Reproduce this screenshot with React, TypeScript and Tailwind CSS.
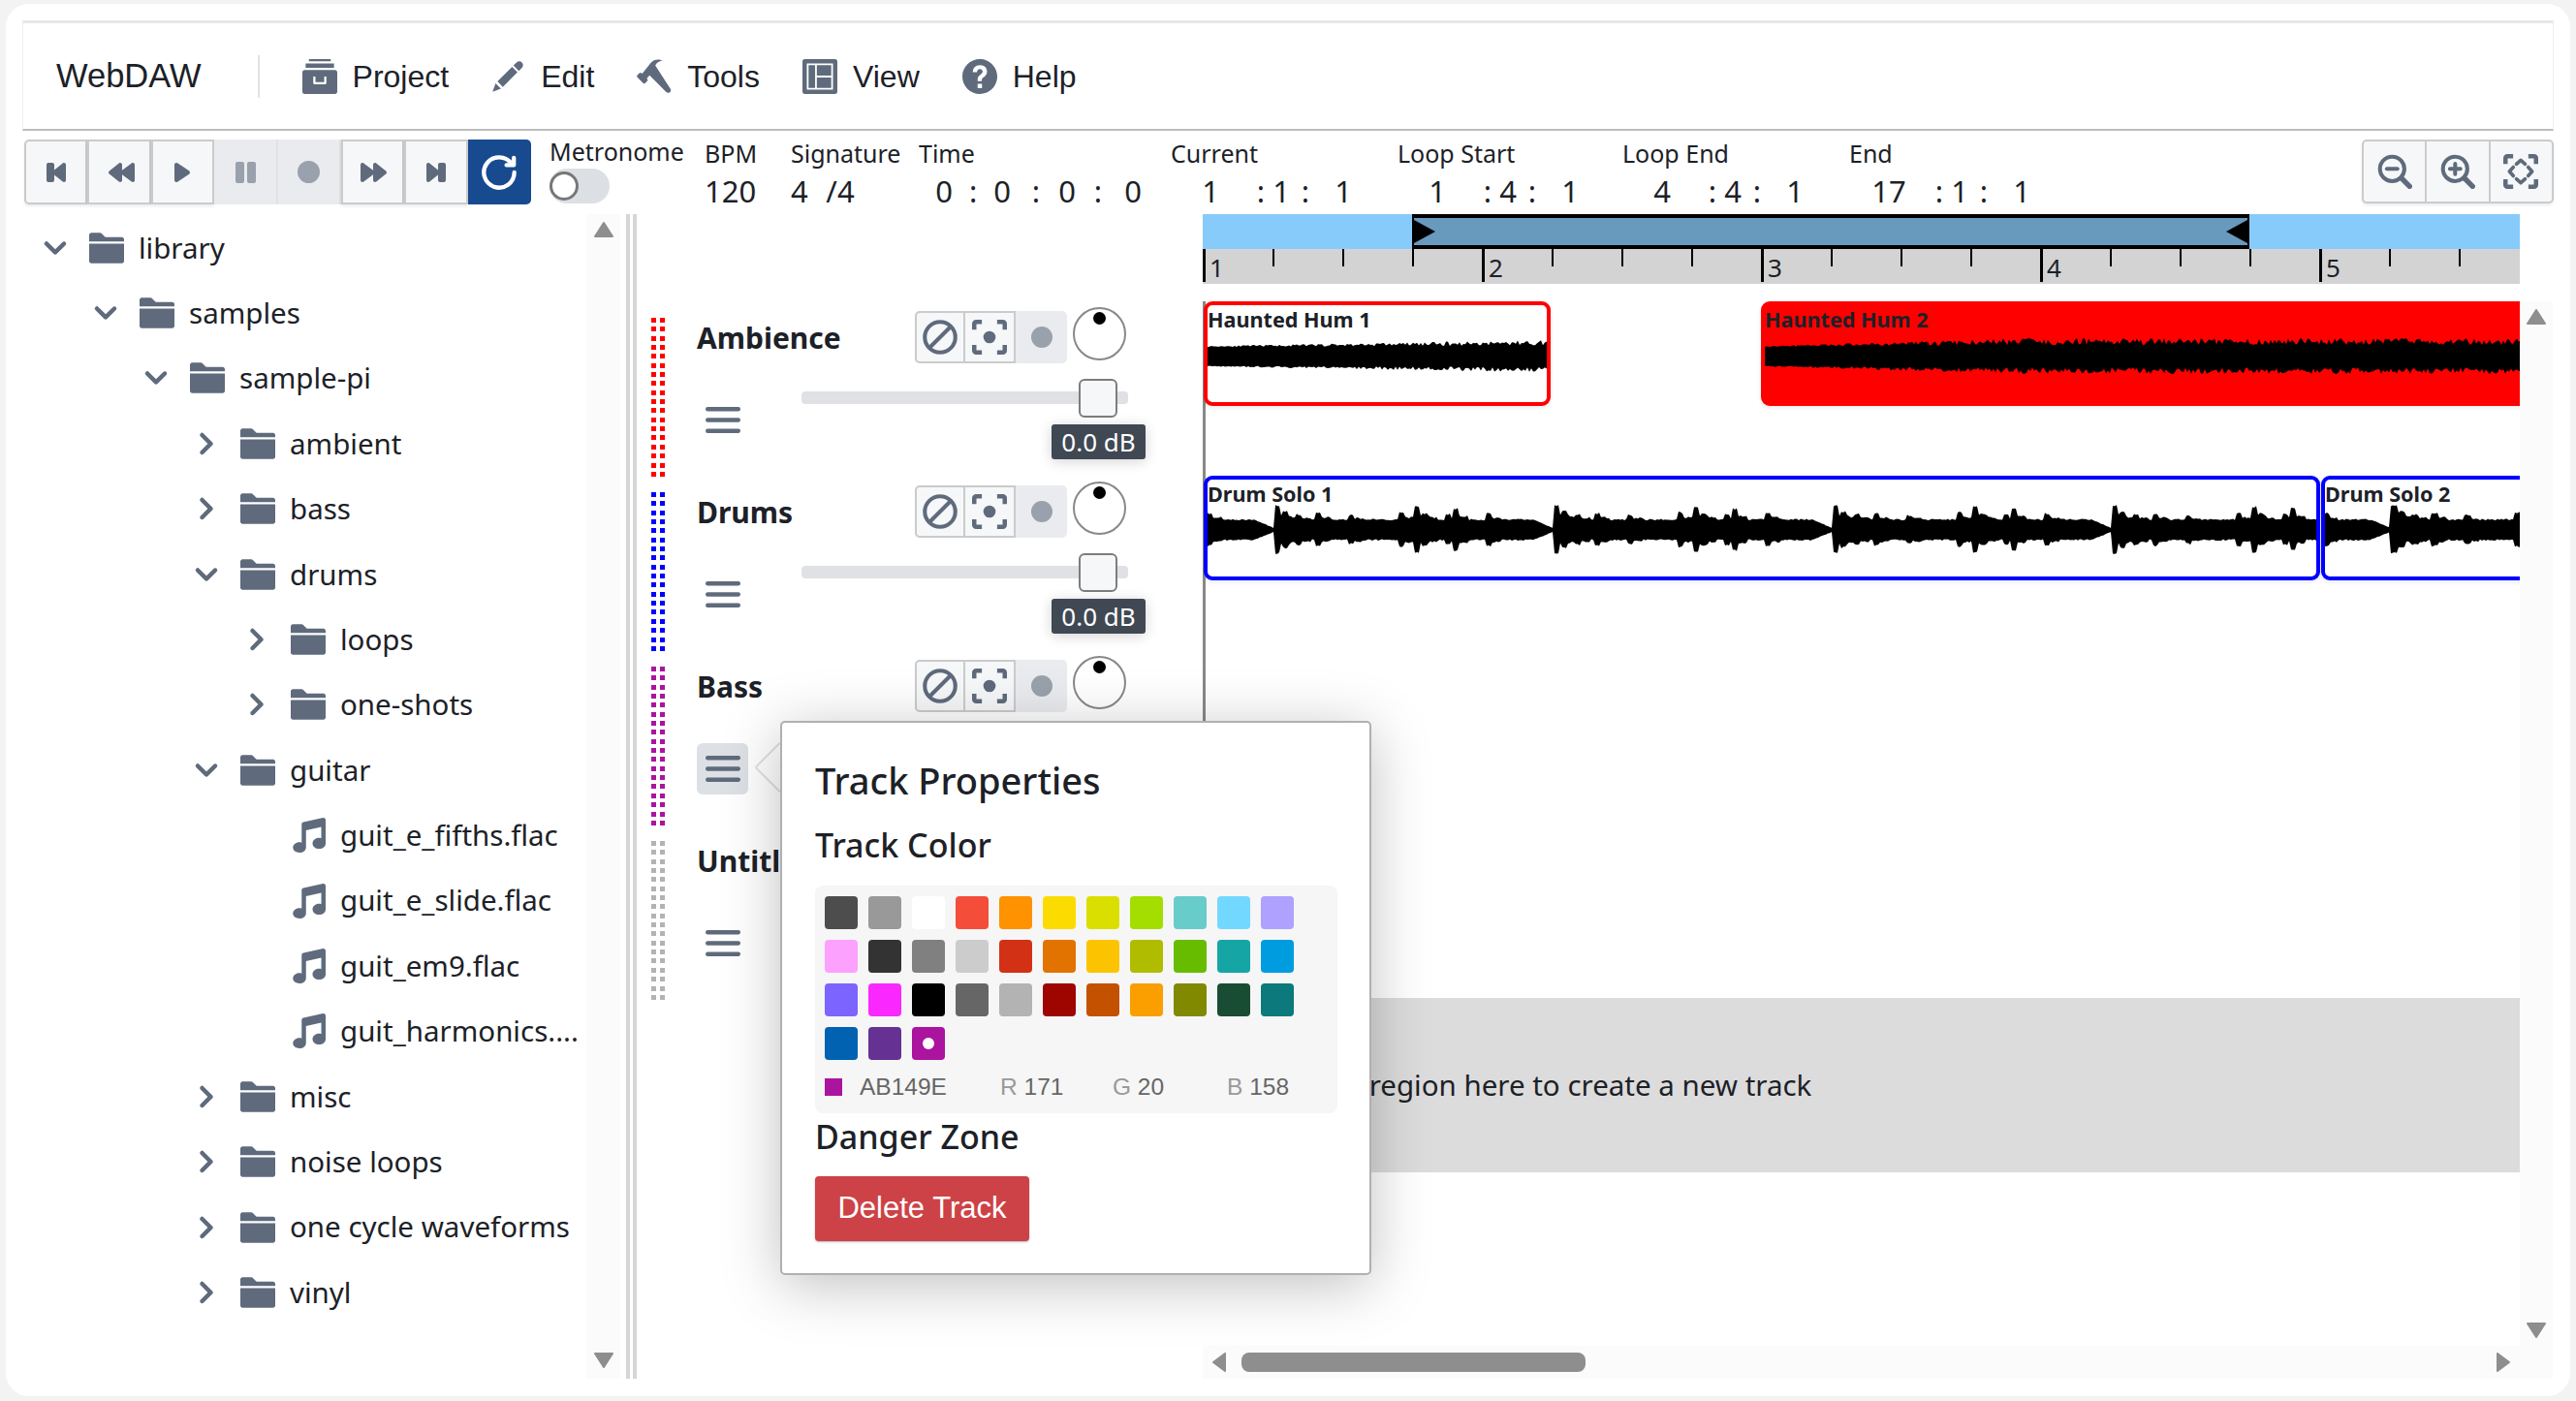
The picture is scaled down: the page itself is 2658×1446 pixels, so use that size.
import React from 'react';

const SANS = "font-['Noto_Sans','Open_Sans',sans-serif]";

const SWATCHES = [
  '#4D4D4D', '#999999', '#FFFFFF', '#F44E3B', '#FE9200', '#FCDC00', '#DBDF00', '#A4DD00', '#68CCCA', '#73D8FF', '#AEA1FF',
  '#FDA1FF', '#333333', '#808080', '#CCCCCC', '#D33115', '#E27300', '#FCC400', '#B0BC00', '#68BC00', '#16A5A5', '#009CE0',
  '#7B64FF', '#FA28FF', '#000000', '#666666', '#B3B3B3', '#9F0500', '#C45100', '#FB9E00', '#808900', '#194D33', '#0C797D',
  '#0062B1', '#653294', '#AB149E',
];

const TREE: { label: string; level: number; kind: 'open' | 'closed' | 'file' }[] = [
  { label: 'library', level: 0, kind: 'open' },
  { label: 'samples', level: 1, kind: 'open' },
  { label: 'sample-pi', level: 2, kind: 'open' },
  { label: 'ambient', level: 3, kind: 'closed' },
  { label: 'bass', level: 3, kind: 'closed' },
  { label: 'drums', level: 3, kind: 'open' },
  { label: 'loops', level: 4, kind: 'closed' },
  { label: 'one-shots', level: 4, kind: 'closed' },
  { label: 'guitar', level: 3, kind: 'open' },
  { label: 'guit_e_fifths.flac', level: 4, kind: 'file' },
  { label: 'guit_e_slide.flac', level: 4, kind: 'file' },
  { label: 'guit_em9.flac', level: 4, kind: 'file' },
  { label: 'guit_harmonics....', level: 4, kind: 'file' },
  { label: 'misc', level: 3, kind: 'closed' },
  { label: 'noise loops', level: 3, kind: 'closed' },
  { label: 'one cycle waveforms', level: 3, kind: 'closed' },
  { label: 'vinyl', level: 3, kind: 'closed' },
];

const TRACKS = [
  { name: 'Ambience', dot: 'bg-[#ff0000]' },
  { name: 'Drums', dot: 'bg-[#0000ff]' },
  { name: 'Bass', dot: 'bg-[#ab149e]', active: true },
  { name: 'Untitled', dot: 'bg-[#b3b3b3]' },
];

const PATHS: Record<string, string> = {
  folder: 'M0 14c0 .55.45 1 1 1h14c.55 0 1-.45 1-1V6H0v8zM15 3H7.41L5.71 1.29A.997.997 0 005 1H1c-.55 0-1 .45-1 1v3h16V4c0-.55-.45-1-1-1z',
  down: 'M12 5c-.28 0-.53.11-.71.29L8 8.59l-3.29-3.3a1.003 1.003 0 00-1.42 1.42l4 4c.18.18.43.29.71.29s.53-.11.71-.29l4-4A1.003 1.003 0 0012 5z',
  right: 'M10.71 7.29l-4-4a1.003 1.003 0 00-1.42 1.42L8.59 8 5.3 11.29c-.19.18-.3.43-.3.71a1.003 1.003 0 001.71.71l4-4c.18-.18.29-.43.29-.71 0-.28-.11-.53-.29-.71z',
  music: 'M15 0c-.07 0-.13.03-.19.04V.03l-9 2v.01C5.35 2.13 5 2.52 5 3v8.4c-.31-.11-.65-.18-1-.18-1.66 0-3 1.12-3 2.5S2.34 16 4 16s3-1.12 3-2.5V5.8l7-1.56v5.18c-.31-.11-.65-.18-1-.18-1.66 0-3 1.12-3 2.5s1.34 2.5 3 2.5 3-1.12 3-2.5V1c0-.55-.45-1-1-1z',
  project: 'M3 0h10v1H3zM1.5 2h13v2h-13zM1 5h14c.55 0 1 .45 1 1v9c0 .55-.45 1-1 1H1c-.55 0-1-.45-1-1V6c0-.55.45-1 1-1zm4 3v3c0 .3.2.5.5.5h5c.3 0 .5-.2.5-.5V8h-1v2.5H6V8H5z',
  edit: 'M3.25 10.26l2.47 2.47 6.69-6.69-2.46-2.48-6.7 6.7zM.99 14.99l3.86-1.39-2.46-2.44-1.4 3.83zm12.25-14c-.48 0-.92.2-1.24.51l-1.44 1.44 2.47 2.47 1.44-1.44c.32-.32.51-.75.51-1.24.01-.95-.77-1.74-1.74-1.74z',
  build: 'M.3 7.3l.9-.9c.3-.3.7-.3 1 0l.3.3 4-5C7.5.6 9.2 0 11 .4l.8.3c-1.6.3-2.8 1-3.3 2.2l6.9 10.6c.4.6.3 1.3-.2 1.7-.6.4-1.3.3-1.8-.2L5.9 7.4 4.6 8.9l.2.2c.3.3.3.7 0 1l-.9.9c-.3.3-.7.3-1 0L.3 8.3c-.3-.3-.3-.7 0-1z',
  layout: 'M1 0h14c.55 0 1 .45 1 1v14c0 .55-.45 1-1 1H1c-.55 0-1-.45-1-1V1c0-.55.45-1 1-1zM2 2h12v12H2zM2.8 2.8v10.4h3V2.8zM6.6 2.8v4.8h6.6V2.8zM6.6 8.4v4.8h6.6V8.4z',
  help: 'M8 0C3.58 0 0 3.58 0 8s3.58 8 8 8 8-3.58 8-8-3.58-8-8-8zM7 13.3h2v-2H7v2zM8 2.8C6 2.8 4.8 4.1 4.8 6h1.9c0-.9.5-1.5 1.3-1.5s1.3.5 1.3 1.2c0 .6-.4 1-1.1 1.5-.9.6-1.2 1.3-1.2 2.3v.6h1.9v-.4c0-.6.2-1 1-1.5 1-.7 1.4-1.4 1.4-2.5 0-1.8-1.3-2.9-3.3-2.9z',
  stepBack: 'M12 3c-.24 0-.44.09-.62.23l-.01-.01L7 6.72V4c0-.55-.45-1-1-1H4c-.55 0-1 .45-1 1v8c0 .55.45 1 1 1h2c.55 0 1-.45 1-1V9.28l4.38 3.5.01-.01c.17.14.37.23.61.23.55 0 1-.45 1-1V4c0-.55-.45-1-1-1z',
  fastBack: 'M15 3c-.23 0-.44.09-.61.22l-.01-.01L9.5 6.9V4c0-.55-.45-1-1-1-.23 0-.44.09-.61.22l-.01-.01-5 4 .01.01C2.66 7.41 2.5 7.68 2.5 8c0 .32.16.59.39.78l-.01.01 5 4 .01-.01c.17.13.38.22.61.22.55 0 1-.45 1-1V9.1l4.88 3.69.01-.01c.17.13.38.22.61.22.55 0 1-.45 1-1V4c0-.55-.45-1-1-1z',
  play: 'M12 8c0-.35-.19-.64-.46-.82l.01-.02-6-4-.01.02A.969.969 0 005 3c-.55 0-1 .45-1 1v8c0 .55.45 1 1 1 .21 0 .39-.08.54-.18l.01.02 6-4-.01-.02c.27-.18.46-.47.46-.82z',
};

function Icon({ name, size = 36, className = 'text-[#5f6b7c]', flip = false }: { name: string; size?: number; className?: string; flip?: boolean }) {
  const shift = name === 'fastBack' ? 17.5 : 16;
  return (
    <svg width={size} height={size} viewBox="0 0 16 16" className={`shrink-0 ${className}`} fill="currentColor">
      <path d={PATHS[name]} fillRule="evenodd" transform={flip ? `translate(${shift} 0) scale(-1 1)` : undefined} />
    </svg>
  );
}

function StrokeIcon({ size = 36, children, className = 'text-[#5f6b7c]' }: { size?: number; children: React.ReactNode; className?: string }) {
  return (
    <svg width={size} height={size} viewBox="0 0 16 16" fill="none" stroke="currentColor" strokeWidth="1.8" strokeLinecap="round" strokeLinejoin="round" className={`shrink-0 ${className}`}>
      {children}
    </svg>
  );
}

const Corners = () => (
  <path d="M1 4.5V1.8c0-.4.4-.8.8-.8h2.7M11.5 1h2.7c.4 0 .8.4.8.8v2.7M15 11.5v2.7c0 .4-.4.8-.8.8h-2.7M4.5 15H1.8c-.4 0-.8-.4-.8-.8v-2.7" strokeWidth="2" strokeLinecap="butt" strokeLinejoin="miter" />
);

function MenuItem({ icon, label, gap }: { icon: string; label: string; gap: string }) {
  return (
    <div className={`flex items-center gap-[16px] ${gap}`}>
      <Icon name={icon} />
      <span className="font-['Liberation_Sans',Arial,sans-serif] text-[32px] text-[#1c2127]">{label}</span>
    </div>
  );
}

function TButton({ children, disabled, active, first }: { children: React.ReactNode; disabled?: boolean; active?: boolean; first?: boolean }) {
  const tone = active
    ? 'bg-[#184a90] rounded-r-[5px]'
    : disabled
      ? 'bg-[#e9ebee] border-r-2 border-[#dfe1e5]'
      : 'bg-[#f6f7f9] border-2 border-[#cbcbcb] shadow-[0_2px_3px_rgba(0,0,0,0.08)]';
  return <div className={`flex h-full w-[65.4px] shrink-0 items-center justify-center ${first ? 'rounded-l-[5px]' : ''} ${tone}`}>{children}</div>;
}

function Field({ label, width, cells }: { label: string; width: string; cells: [string, string][] }) {
  return (
    <div className={`flex shrink-0 flex-col ${width}`}>
      <span className="h-[28px] whitespace-nowrap text-[25px] leading-[28px] text-[#1c2127]">{label}</span>
      <div className="mt-[5px] flex h-[40px] items-center text-[31px] leading-[40px] text-[#1c2127]">
        {cells.map(([text, w], i) => (
          <span key={i} className={`text-center ${w}`}>{text}</span>
        ))}
      </div>
    </div>
  );
}

function ScrollArrow({ dir, className = '' }: { dir: 'up' | 'down' | 'left' | 'right'; className?: string }) {
  const points = { up: '10,1 19,15 1,15', down: '1,1 19,1 10,15', left: '15,1 15,19 3,10', right: '5,1 5,19 17,10' }[dir];
  return (
    <svg width="20" height="20" viewBox="0 0 20 20" className={className}>
      <polygon points={points} fill="#8e8e8e" stroke="#8e8e8e" strokeWidth="2" strokeLinejoin="round" />
    </svg>
  );
}

function seeded(seed: number) {
  let s = seed;
  return () => {
    s = (s * 16807) % 2147483647;
    return s / 2147483647;
  };
}

function wavePath(width: number, h: number, amp: (x: number, r: () => number) => number, seed: number) {
  const r = seeded(seed);
  const top: string[] = [];
  const bottom: string[] = [];
  for (let x = 0; x <= width; x += 2) {
    const a = amp(x, r);
    const b = amp(x, r);
    top.push(`${x},${(h / 2 - a).toFixed(1)}`);
    bottom.unshift(`${x},${(h / 2 + b * 0.95).toFixed(1)}`);
  }
  return `M${top.join(' L')} L${bottom.join(' L')} Z`;
}

// per bar drum shape: the hits repeat every 288px
const HITS = [[0, 24], [8, 18], [22, 15], [42, 16], [76, 14], [128, 17], [144, 23], [152, 16], [176, 15], [184, 21], [218, 16]];

function drumAmp(offset: number) {
  return (x: number, r: () => number) => {
    const t = (((x + offset) % 288) + 288) % 288;
    if (t > 268) return Math.max(2, 10 - (t - 268) * 0.42) + r() * 0.6;
    let a = 10 + r() * 1.6;
    for (const [at, peak] of HITS) {
      if (t >= at && t < at + 7) a = Math.max(a, peak + r() * 2);
      else if (t >= at + 7 && t < at + 16) a = Math.max(a, 10 + (peak - 10) * 0.3 + r() * 2);
    }
    return a;
  };
}

function Waveform({ width, height, d }: { width: number; height: number; d: string }) {
  return (
    <svg width={width} height={height} viewBox={`0 0 ${width} ${height}`} className="block">
      <path d={d} fill="#000" />
    </svg>
  );
}

function Clip({ title, left, top, width, box, wave, waveTop, waveHeight }: { title: string; left: number; top: number; width: number; box: string; wave: string; waveTop: number; waveHeight: number }) {
  return (
    <div className={`absolute box-border h-[108px] overflow-hidden rounded-[9px] shadow-[0_2px_4px_rgba(0,0,0,0.08)] ${box}`} style={{ left, top, width }}>
      <div className="whitespace-nowrap text-[21.6px] font-bold leading-[30px] text-[#1c2127]">{title}</div>
      <div className="absolute left-0" style={{ top: waveTop }}>
        <Waveform width={width} height={waveHeight} d={wave} />
      </div>
    </div>
  );
}

function TrackHeader({ name, dot, active }: { name: string; dot: string; active?: boolean }) {
  return (
    <div className="flex h-[180px] shrink-0 pl-[15px]">
      <div className="mt-[17px] grid h-[164px] grid-cols-[5px_5px] content-between gap-x-[4px]">
        {Array.from({ length: 36 }).map((_, i) => (
          <span key={i} className={`h-[5px] w-[5px] ${dot}`} />
        ))}
      </div>
      <div className="ml-[33px] flex flex-col">
        <div className="flex h-[80px] items-start">
          <span className="mt-[15px] w-[225px] text-[30px] font-bold leading-[46px] text-[#1c2127]">{name}</span>
          <div className="mt-[10px] flex h-[54px] w-[157px] rounded-[5px] bg-[#e9ebee]">
            <div className="flex w-[52px] items-center justify-center rounded-l-[5px] border-2 border-[#cbcbcb] bg-[#f6f7f9]">
              <StrokeIcon>
                <circle cx="8" cy="8" r="7" />
                <path d="M3.2 12.8L12.8 3.2" />
              </StrokeIcon>
            </div>
            <div className="flex w-[52px] items-center justify-center border-2 border-l-0 border-[#cbcbcb] bg-[#f6f7f9]">
              <StrokeIcon>
                <Corners />
                <circle cx="8" cy="8" r="2.8" fill="currentColor" stroke="none" />
              </StrokeIcon>
            </div>
            <div className="flex w-[53px] items-center justify-center">
              <span className="h-[22px] w-[22px] rounded-full bg-[#99a1ac]" />
            </div>
          </div>
          <div className="relative ml-[6px] mt-[6px] h-[55px] w-[55px] rounded-full border-2 border-[#888888] bg-white">
            <span className="absolute left-[19px] top-[3px] h-[13px] w-[13px] rounded-full bg-black" />
          </div>
        </div>
        <div className="flex">
          <div className={`mt-[16px] flex h-[53px] w-[53px] items-center justify-center rounded-[6px] ${active ? 'bg-[#dde0e5]' : ''}`}>
            <svg width="36" height="27" viewBox="0 0 36 27" className="text-[#5f6b7c]" fill="currentColor">
              <rect x="0" y="0" width="36" height="4.4" rx="2.2" />
              <rect x="0" y="11.3" width="36" height="4.4" rx="2.2" />
              <rect x="0" y="22.6" width="36" height="4.4" rx="2.2" />
            </svg>
          </div>
          <div className="relative ml-[55px] mt-[13px] h-[13px] w-[337px] rounded-[4px] bg-[#dfe1e5]">
            <span className="absolute left-[286px] top-[-13px] h-[40px] w-[40px] rounded-[6px] border-2 border-[#7d7d7d] bg-[#f6f7f9]" />
            <span className="absolute left-[258px] top-[34px] flex h-[36px] w-[97px] items-center justify-center rounded-[3px] bg-[#404854] text-[26px] text-white shadow-[0_2px_14px_rgba(0,0,0,0.18)]">0.0 dB</span>
          </div>
        </div>
      </div>
    </div>
  );
}

export default function App() {
  const hum1 = wavePath(358, 50, (x, r) => 10 + (x / 358) * 1.5 + r() * (1 + (x / 358) * 5), 11);
  const hum2 = wavePath(790, 50, (x, r) => 10 + Math.min(x / 260, 1) * 2 + r() * (1 + Math.min(x / 260, 1) * 6), 23);
  const drum1 = wavePath(1151, 60, drumAmp(-69), 37);
  const drum2 = wavePath(236, 60, drumAmp(-68), 41);
  const bars = [0, 1, 2, 3, 4];
  const subs = Array.from({ length: 19 }).map((_, i) => i * 72).filter((x) => x % 288 !== 0);

  return (
    <div className={`relative h-[1446px] w-[2658px] overflow-hidden bg-[#f3f3f3] px-[6px] pt-[4px] ${SANS}`}>
      <div className="flex h-[1437px] flex-col rounded-[24px] bg-white px-[17px] pt-[17px]">
        {/* menu bar */}
        <div className="box-border flex h-[114px] shrink-0 items-center border-x border-t-[3px] border-b-[2px] border-x-[#eeeeee] border-t-[#e8e8e8] border-b-[#bdbdbd] bg-white pl-[34px]">
          <span className="font-['Liberation_Sans',Arial,sans-serif] text-[34.5px] text-[#1c2127]">WebDAW</span>
          <span className="ml-[58px] h-[44px] w-[2px] bg-[#e2e3e5]" />
          <MenuItem icon="project" label="Project" gap="ml-[44px]" />
          <MenuItem icon="edit" label="Edit" gap="ml-[43px]" />
          <MenuItem icon="build" label="Tools" gap="ml-[44px]" />
          <MenuItem icon="layout" label="View" gap="ml-[44px]" />
          <MenuItem icon="help" label="Help" gap="ml-[44px]" />
        </div>

        {/* transport row */}
        <div className="mt-[9px] flex h-[67px] shrink-0 pl-[2px]">
          <div className="flex h-[67px] w-[524px] shrink-0">
            <TButton first><Icon name="stepBack" size={32} /></TButton>
            <TButton><Icon name="fastBack" size={32} /></TButton>
            <TButton><Icon name="play" size={32} /></TButton>
            <TButton disabled>
              <svg width="24" height="24" viewBox="0 0 24 24" fill="#99a1ac"><rect x="2" y="1" width="9" height="22" rx="2" /><rect x="14" y="1" width="9" height="22" rx="2" /></svg>
            </TButton>
            <TButton disabled><span className="h-[23px] w-[23px] rounded-full bg-[#99a1ac]" /></TButton>
            <TButton><Icon name="fastBack" size={32} flip /></TButton>
            <TButton><Icon name="stepBack" size={32} flip /></TButton>
            <TButton active>
              <StrokeIcon size={38} className="text-white">
                <path d="M13.4 4.2A6.6 6.6 0 1 0 14.6 8" />
                <path d="M14.4 1.6v3.2h-3.2" />
              </StrokeIcon>
            </TButton>
          </div>
          <div className="ml-[18px] flex w-[160px] shrink-0 flex-col">
            <span className="whitespace-nowrap text-[25px] leading-[24px] text-[#1c2127]">Metronome</span>
            <span className="relative mt-[6px] h-[36px] w-[62px] rounded-full bg-[#dcdfe3]">
              <span className="absolute left-0 top-[3px] h-[30px] w-[30px] rounded-full border-[3px] border-[#777777] bg-white" />
            </span>
          </div>
          <Field label="BPM" width="w-[89px]" cells={[['120', 'w-[52px]']]} />
          <Field label="Signature" width="w-[132px]" cells={[['4', 'w-[16px]'], ['/4', 'w-[70px]']]} />
          <Field label="Time" width="w-[260px]" cells={[['0', 'w-[52px]'], [':', 'w-[8px]'], ['0', 'w-[52px]'], [':', 'w-[18px]'], ['0', 'w-[46px]'], [':', 'w-[18px]'], ['0', 'w-[54px]']]} />
          {[
            ['Current', '1', '1', '1'],
            ['Loop Start', '1', '4', '1'],
            ['Loop End', '4', '4', '1'],
            ['End', '17', '1', '1'],
          ].map(([label, a, b, c]) => (
            <Field key={label} label={label} width={label === 'Loop Start' ? 'w-[232px]' : 'w-[234px]'} cells={[[a, 'w-[82px]'], [':', 'w-[22px]'], [b, 'w-[20px]'], [':', 'w-[30px]'], [c, 'w-[48px]']]} />
          ))}
          <div className="ml-auto flex h-[66px] w-[198px] shrink-0 rounded-[5px] border-2 border-[#cbcbcb] bg-[#f6f7f9] shadow-[0_2px_3px_rgba(0,0,0,0.08)]">
            <div className="flex flex-1 items-center justify-center border-r-2 border-[#cbcbcb]">
              <StrokeIcon>
                <circle cx="6.8" cy="6.8" r="5.6" />
                <path d="M11 11l3.8 3.8" strokeWidth="2.4" />
                <path d="M4.4 6.8h4.8" />
              </StrokeIcon>
            </div>
            <div className="flex flex-1 items-center justify-center border-r-2 border-[#cbcbcb]">
              <StrokeIcon>
                <circle cx="6.8" cy="6.8" r="5.6" />
                <path d="M11 11l3.8 3.8" strokeWidth="2.4" />
                <path d="M4.4 6.8h4.8M6.8 4.4v4.8" />
              </StrokeIcon>
            </div>
            <div className="flex flex-1 items-center justify-center">
              <StrokeIcon>
                <Corners />
                <path d="M6 4.6L8 2.8l2 1.8M11.4 6L13.2 8l-1.8 2M10 11.4L8 13.2 6 11.4M4.6 10L2.8 8l1.8-2" strokeWidth="1.6" />
              </StrokeIcon>
            </div>
          </div>
        </div>

        {/* main area */}
        <div className="mt-[10px] flex h-[1202px] shrink-0">
          <div className="flex w-[634px] shrink-0">
            <div className="flex w-[582px] shrink-0 flex-col overflow-hidden pt-[1px]">
              {TREE.map((row) => (
                <div key={row.label} className="flex h-[67.4px] shrink-0 items-center" style={{ paddingLeft: 16 + row.level * 52 }}>
                  <span className="flex w-[36px] shrink-0 justify-center">
                    {row.kind === 'open' && <Icon name="down" />}
                    {row.kind === 'closed' && <Icon name="right" />}
                  </span>
                  <span className="ml-[17px] shrink-0">
                    <Icon name={row.kind === 'file' ? 'music' : 'folder'} />
                  </span>
                  <span className="ml-[15px] shrink-0 whitespace-nowrap text-[29.5px] text-[#1c2127]">{row.label}</span>
                </div>
              ))}
            </div>
            <div className="flex w-[35px] shrink-0 flex-col items-center justify-between bg-[#fbfbfb] pb-[2px] pt-[8px]">
              <ScrollArrow dir="up" />
              <ScrollArrow dir="down" className="mb-[5px]" />
            </div>
            <div className="ml-[6px] flex h-full shrink-0">
              <span className="w-[4px] bg-[#d6d6d6]" />
              <span className="ml-[3px] w-[4px] bg-[#d6d6d6]" />
            </div>
          </div>

          {/* track headers */}
          <div className="flex w-[584px] shrink-0 flex-col pt-[90px]">
            {TRACKS.map((t) => (
              <TrackHeader key={t.name} {...t} />
            ))}
          </div>

          {/* timeline */}
          <div className="flex w-[1393px] shrink-0 flex-col">
            <div className="w-[1359px] shrink-0">
              <div className="relative h-[36px] bg-[#87cbfa]">
                <div className="absolute left-[216px] top-0 box-border h-[36px] w-[864px] border-x-2 border-y-4 border-black bg-[#689abd]">
                  <svg width="24" height="24" viewBox="0 0 24 24" className="absolute left-[0px] top-[2px]"><polygon points="0,0 22,12 0,24" fill="#000" /></svg>
                  <svg width="24" height="24" viewBox="0 0 24 24" className="absolute right-[0px] top-[2px]"><polygon points="24,0 2,12 24,24" fill="#000" /></svg>
                </div>
              </div>
              <div className="relative h-[36px] overflow-hidden bg-[#d3d3d3]">
                {subs.map((x) => (
                  <span key={x} className="absolute top-0 h-[18px] w-[2px] bg-black" style={{ left: x }} />
                ))}
                {bars.map((b) => (
                  <React.Fragment key={b}>
                    <span className="absolute top-0 h-[34px] w-[3px] bg-black" style={{ left: b * 288 }} />
                    <span className="absolute top-[1px] text-[26px] leading-[36px] text-[#1c2127]" style={{ left: b * 288 + 7 }}>{b + 1}</span>
                  </React.Fragment>
                ))}
              </div>
            </div>
            <div className="mt-[18px] flex h-[1078px] shrink-0">
              <div className="relative h-full w-[1359px] shrink-0 overflow-hidden">
                <span className="absolute left-0 top-0 h-[720px] w-[3px] bg-[#888888]" />
                <Clip title="Haunted Hum 1" left={1} top={0} width={358} box="border-4 border-[#ff0000] bg-white" wave={hum1} waveTop={28} waveHeight={50} />
                <Clip title="Haunted Hum 2" left={576} top={0} width={800} box="border-4 border-[#ff0000] bg-[#ff0000]" wave={hum2} waveTop={28} waveHeight={50} />
                <Clip title="Drum Solo 1" left={1} top={180} width={1152} box="border-4 border-[#0000ff] bg-white" wave={drum1} waveTop={22} waveHeight={60} />
                <Clip title="Drum Solo 2" left={1154} top={180} width={240} box="border-4 border-[#0000ff] bg-white" wave={drum2} waveTop={22} waveHeight={60} />
                <div className="absolute left-0 top-[719px] flex h-[180px] w-full items-center bg-[#dcdcdc] pl-[72px] text-[29.5px] text-[#1c2127]">Drag a region here to create a new track</div>
              </div>
              <div className="flex w-[34px] shrink-0 flex-col items-center justify-between bg-[#fbfbfb] pb-[4px] pt-[8px]">
                <ScrollArrow dir="up" />
                <ScrollArrow dir="down" />
              </div>
            </div>
            <div className="flex h-[34px] shrink-0 items-center bg-[#fbfbfb] pl-[8px] pr-[42px]">
              <ScrollArrow dir="left" />
              <span className="ml-[12px] h-[20px] w-[355px] rounded-[8px] bg-[#8e8e8e]" />
              <ScrollArrow dir="right" className="ml-auto" />
            </div>
          </div>
        </div>
      </div>

      {/* track properties popover */}
      <div className="absolute left-[805px] top-[744px] z-20 h-[572px] w-[610px]">
        <span className="absolute left-[-19px] top-[29px] h-[38px] w-[38px] rotate-45 rounded-[3px] border-2 border-[#e0e0e0] bg-white" />
        <div className="relative box-border flex h-full flex-col rounded-[5px] border-2 border-[#b0b0b0] bg-white px-[34px] pt-[34px] shadow-[0_10px_60px_rgba(0,0,0,0.25)]">
          <h2 className="text-[38px] font-medium leading-[50px] text-[#1c2127]">Track Properties</h2>
          <h3 className="mt-[19px] text-[34px] font-medium leading-[46px] text-[#1c2127]">Track Color</h3>
          <div className="mt-[19px] h-[235px] w-[539px] shrink-0 rounded-[8px] bg-[#f6f6f6] px-[10px] pt-[11px] font-['Liberation_Sans',Arial,sans-serif]">
            <div className="flex w-[500px] flex-wrap gap-[11px]">
              {SWATCHES.map((c) => (
                <span key={c} className="flex h-[34px] w-[34px] items-center justify-center rounded-[4px]" style={{ backgroundColor: c }}>
                  {c === '#AB149E' && <span className="h-[12px] w-[12px] rounded-full bg-white" />}
                </span>
              ))}
            </div>
            <div className="mt-[10px] flex h-[36px] items-center text-[24.5px] text-[#666666]">
              <span className="h-[18px] w-[18px] bg-[#ab149e]" />
              <span className="ml-[18px] w-[145px]">AB149E</span>
              <span className="w-[116px]"><span className="text-[#999999]">R</span> 171</span>
              <span className="w-[118px]"><span className="text-[#999999]">G</span> 20</span>
              <span><span className="text-[#999999]">B</span> 158</span>
            </div>
          </div>
          <h3 className="mt-[1px] text-[34px] font-medium leading-[46px] text-[#1c2127]">Danger Zone</h3>
          <button className="mt-[18px] h-[67px] w-[221px] shrink-0 rounded-[4px] bg-[#cd4246] font-['Liberation_Sans',Arial,sans-serif] text-[31px] text-white shadow-[0_1px_2px_rgba(0,0,0,0.3)]">Delete Track</button>
        </div>
      </div>
    </div>
  );
}
